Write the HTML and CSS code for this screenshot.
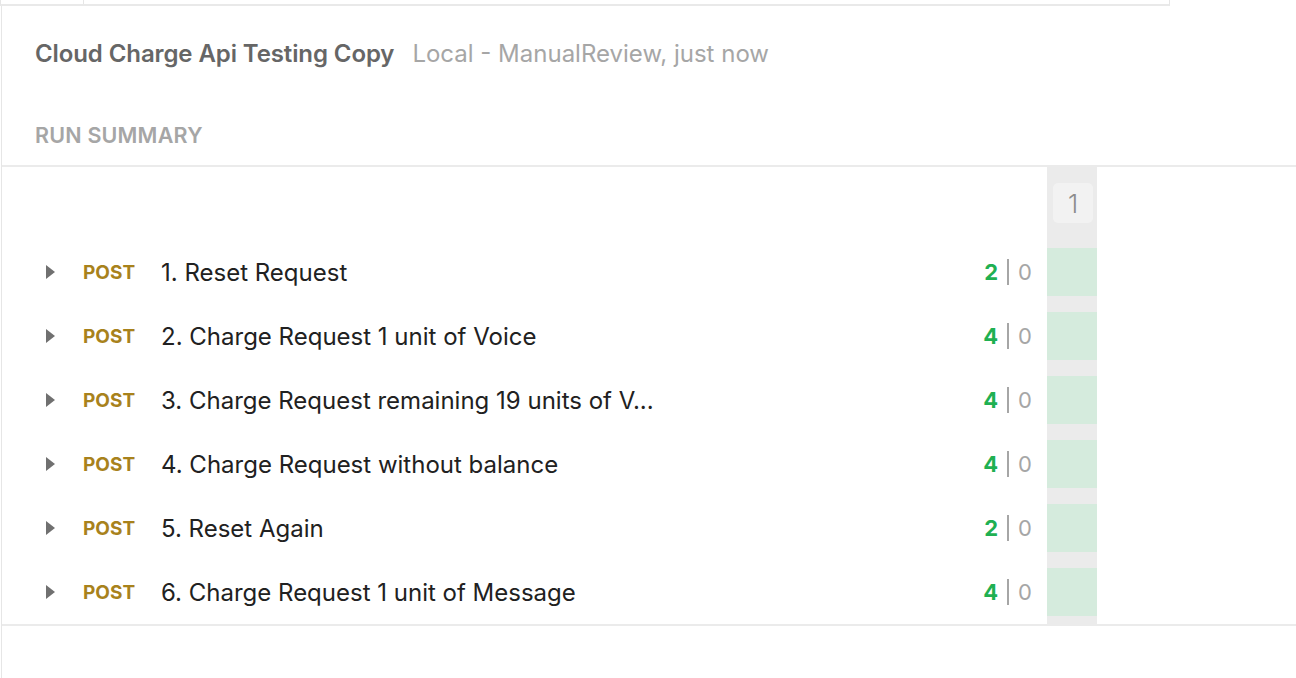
FILE: index.html
```html
<!DOCTYPE html>
<html>
<head>
<meta charset="utf-8">
<link rel="stylesheet" href="styles.css">
</head>
<body>
<div class="topbar"><div class="toptab"></div></div>
<div class="panel">
  <div class="head">
    <div class="title-row">
      <span class="title">Cloud Charge Api Testing Copy</span>
      <span class="meta">Local - ManualReview, just now</span>
    </div>
    <div class="section">RUN SUMMARY</div>
  </div>
  <div class="table">
    <div class="hrow">
      <div class="main"></div>
      <div class="iter"><div class="badge">1</div></div>
    </div>
    <div class="row">
      <div class="main">
        <span class="caret"></span><span class="method">POST</span><span class="name">1. Reset Request</span>
        <span class="counts"><b class="pass">2</b><i class="sep"></i><span class="fail">0</span></span>
      </div>
      <div class="iter"><div class="cell"></div></div>
    </div>
    <div class="row">
      <div class="main">
        <span class="caret"></span><span class="method">POST</span><span class="name">2. Charge Request 1 unit of Voice</span>
        <span class="counts"><b class="pass">4</b><i class="sep"></i><span class="fail">0</span></span>
      </div>
      <div class="iter"><div class="cell"></div></div>
    </div>
    <div class="row">
      <div class="main">
        <span class="caret"></span><span class="method">POST</span><span class="name">3. Charge Request remaining 19 units of V...</span>
        <span class="counts"><b class="pass">4</b><i class="sep"></i><span class="fail">0</span></span>
      </div>
      <div class="iter"><div class="cell"></div></div>
    </div>
    <div class="row">
      <div class="main">
        <span class="caret"></span><span class="method">POST</span><span class="name">4. Charge Request without balance</span>
        <span class="counts"><b class="pass">4</b><i class="sep"></i><span class="fail">0</span></span>
      </div>
      <div class="iter"><div class="cell"></div></div>
    </div>
    <div class="row">
      <div class="main">
        <span class="caret"></span><span class="method">POST</span><span class="name">5. Reset Again</span>
        <span class="counts"><b class="pass">2</b><i class="sep"></i><span class="fail">0</span></span>
      </div>
      <div class="iter"><div class="cell"></div></div>
    </div>
    <div class="row">
      <div class="main">
        <span class="caret"></span><span class="method">POST</span><span class="name">6. Charge Request 1 unit of Message</span>
        <span class="counts"><b class="pass">4</b><i class="sep"></i><span class="fail">0</span></span>
      </div>
      <div class="iter"><div class="cell"></div></div>
    </div>
  </div>
</div>
</body>
</html>
```
FILE: styles.css
```css
html, body {
  margin: 0;
  padding: 0;
  background: #fff;
  font-family: Inter, "Noto Sans", sans-serif;
  overflow: hidden;
}
.topbar {
  width: 1168px;
  height: 4px;
  border-left: 1px solid #e6e6e6;
  border-right: 1px solid #e6e6e6;
  border-bottom: 2px solid #e9e9e9;
}
.toptab {
  width: 82px;
  height: 4px;
  border-right: 1px solid #e6e6e6;
}
.panel {
  border-left: 1px solid #e6e6e6;
  margin-left: 1px;
  height: 672px;
}
.head {
  padding: 0 0 0 33px;
  border-bottom: 2px solid #ebebeb;
}
.title-row {
  height: 90px;
  display: flex;
  align-items: flex-start;
  gap: 18px;
  box-sizing: border-box;
}
.title {
  font-size: 24px;
  font-weight: 600;
  color: #666666;
  line-height: 28px;
  margin-top: 34px;
  letter-spacing: -0.1px;
}
.meta {
  font-size: 24px;
  color: #a6a6a6;
  line-height: 28px;
  margin-top: 34px;
}
.section {
  font-size: 21.5px;
  font-weight: 600;
  color: #a6a6a6;
  line-height: 26px;
  height: 69px;
  padding-top: 26px;
  box-sizing: border-box;
  letter-spacing: 0.2px;
}
.hrow, .row {
  display: flex;
}
.main {
  width: 1045px;
  display: flex;
  align-items: center;
}
.hrow { height: 73px; }
.row { height: 64px; }
.iter {
  width: 50px;
  background: #ebebeb;
  box-sizing: border-box;
}
.hrow .iter { padding: 16px 4px 0 6px; }
.badge {
  width: 40px;
  height: 40px;
  border-radius: 5px;
  background: #f2f2f2;
  color: #8c8c8c;
  font-size: 26px;
  font-weight: 300;
  display: flex;
  align-items: center;
  justify-content: center;
}
.row .iter { padding: 8px 0; }
.cell {
  height: 48px;
  background: #d5ebdd;
}
.caret {
  width: 0;
  height: 0;
  border-top: 7px solid transparent;
  border-bottom: 7px solid transparent;
  border-left: 9px solid #707070;
  margin-left: 44px;
}
.method {
  font-size: 19px;
  font-weight: 700;
  color: #a8821c;
  margin-left: 28px;
  width: 78px;
}
.name {
  font-size: 24px;
  color: #212121;
  flex: 1;
}
.counts {
  display: flex;
  align-items: center;
  font-size: 22px;
  margin-right: 15px;
}
.pass {
  color: #1fb052;
  font-weight: 700;
}
.sep {
  width: 2px;
  height: 26px;
  background: #a6a6a6;
  margin: 0 9px 0 9px;
}
.fail {
  color: #a6a6a6;
}
.table {
  border-bottom: 2px solid #ebebeb;
}
```
